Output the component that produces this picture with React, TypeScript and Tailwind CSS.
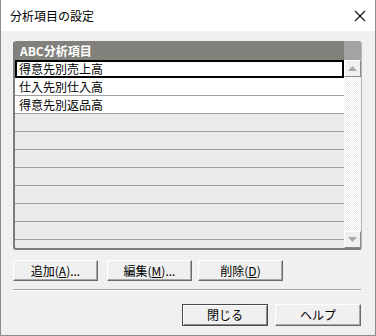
import React from 'react';

const font = { fontFamily: '"Noto Sans CJK JP", "Noto Sans", sans-serif' };

const Btn: React.FC<{ children: React.ReactNode; def?: boolean; w?: string }> = ({ children, def }) => (
  <button
    className={
      def
        ? 'w-[86px] h-[22px] bg-[#f0f0f0] border border-[#4a4a4a] shadow-[inset_1px_1px_0_#ffffff,inset_-1px_-1px_0_#8a8a8a] text-[12px] leading-none text-black flex items-center justify-center'
        : 'w-[86px] h-[22px] bg-[#f0f0f0] border border-t-[#ffffff] border-l-[#ffffff] border-r-[#6a6a6a] border-b-[#6a6a6a] shadow-[inset_-1px_-1px_0_#a8a8a8] text-[12px] leading-none text-black flex items-center justify-center'
    }
  >
    {children}
  </button>
);

const SmallBtn: React.FC<{ children: React.ReactNode }> = ({ children }) => (
  <button className="w-[85px] h-[21px] bg-[#f0f0f0] border border-t-[#ffffff] border-l-[#ffffff] border-r-[#6a6a6a] border-b-[#6a6a6a] shadow-[inset_-1px_-1px_0_#a8a8a8] text-[12px] leading-none text-black flex items-center justify-center">
    {children}
  </button>
);

const Arrow: React.FC<{ up?: boolean }> = ({ up }) => (
  <svg width="9" height="5" viewBox="0 0 9 5">
    <path d={up ? 'M0 5 L4.5 0 L9 5 Z' : 'M0 0 L4.5 5 L9 0 Z'} fill="#a8a8a8" />
  </svg>
);

export default function App() {
  const items = ['得意先別売上高', '仕入先別仕入高', '得意先別返品高'];
  const empty = Array.from({ length: 8 });

  return (
    <div
      className="w-[376px] h-[336px] flex flex-col bg-[#f0f0f0] border border-[#8c8c8c] border-t-0 overflow-hidden"
      style={font}
    >
      {/* title bar */}
      <div className="h-[31px] bg-white flex items-center justify-between pl-[9px] pr-[8px] shrink-0">
        <span className="text-[12px] text-black">分析項目の設定</span>
        <svg width="12" height="12" viewBox="0 0 12 12" className="mr-[1px]">
          <path d="M1 1 L11 11 M11 1 L1 11" stroke="#111" strokeWidth="1.1" />
        </svg>
      </div>

      <div className="flex-1 flex flex-col px-[12px] pt-[10px]">
        {/* list box */}
        <div className="w-[349px] h-[209px] shrink-0 rounded-[3px] overflow-hidden border-l-2 border-b-2 border-[#7d7d78] border-r border-r-[#b4b4b4] flex flex-col bg-[#ebebeb]">
          <div className="h-[19px] flex shrink-0">
            <div className="flex-1 bg-[#82817c] text-white font-bold text-[12px] leading-[19px] pl-[5px]">ABC分析項目</div>
            <div className="w-[17px] bg-[#a3a3a3]" />
          </div>
          <div className="flex-1 flex min-h-0">
            <div className="flex-1 flex flex-col">
              {items.map((t, i) => (
                <div
                  key={t}
                  className={
                    i === 0
                      ? 'h-[18px] shrink-0 bg-white border-2 border-black text-[12px] leading-[14px] pl-[2px] text-black'
                      : 'h-[18px] shrink-0 bg-white border-b border-[#a0a0a0] text-[12px] leading-[17px] pl-[4px] text-black'
                  }
                >
                  {t}
                </div>
              ))}
              {empty.map((_, i) => (
                <div key={i} className="h-[18px] shrink-0 border-b border-[#a0a0a0]" />
              ))}
            </div>
            <div className="w-[17px] flex flex-col bg-[#f5f5f5]">
              <div className="h-[17px] bg-[#f0f0f0] border border-t-white border-l-white border-r-[#8a8a8a] border-b-[#8a8a8a] flex items-center justify-center">
                <Arrow up />
              </div>
              <div className="flex-1 bg-[repeating-conic-gradient(#ffffff_0_25%,#ececec_0_50%)] bg-[length:2px_2px]" />
              <div className="h-[17px] bg-[#f0f0f0] border border-t-white border-l-white border-r-[#8a8a8a] border-b-[#8a8a8a] flex items-center justify-center">
                <Arrow />
              </div>
            </div>
          </div>
        </div>

        {/* action buttons */}
        <div className="flex mt-[10px]">
          <SmallBtn>
            追加(<span className="underline">A</span>)...
          </SmallBtn>
          <div className="w-[9px]" />
          <SmallBtn>
            編集(<span className="underline">M</span>)...
          </SmallBtn>
          <div className="w-[6px]" />
          <SmallBtn>
            削除(<span className="underline">D</span>)
          </SmallBtn>
        </div>

        {/* separator */}
        <div className="mt-[8px] w-[348px] h-[2px] shrink-0 border-t border-[#a0a0a0] border-b border-b-white" />

        {/* bottom buttons */}
        <div className="flex justify-end gap-[7px] mt-[13px] pr-[2px]">
          <Btn def>閉じる</Btn>
          <Btn>ヘルプ</Btn>
        </div>
      </div>
    </div>
  );
}
